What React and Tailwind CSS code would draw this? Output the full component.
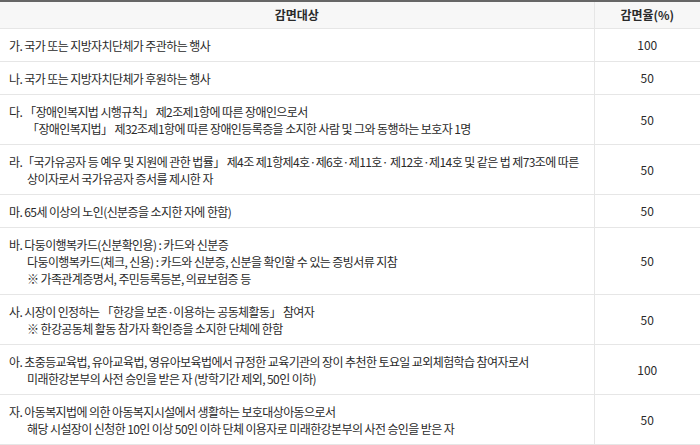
const rows = [
  { lines: ['가. 국가 또는 지방자치단체가 주관하는 행사'], rate: '100' },
  { lines: ['나. 국가 또는 지방자치단체가 후원하는 행사'], rate: '50' },
  {
    lines: [
      '다. 「장애인복지법 시행규칙」 제2조제1항에 따른 장애인으로서',
      '「장애인복지법」 제32조제1항에 따른 장애인등록증을 소지한 사람 및 그와 동행하는 보호자 1명',
    ],
    rate: '50',
  },
  {
    lines: [
      '라.「국가유공자 등 예우 및 지원에 관한 법률」 제4조 제1항제4호·제6호·제11호· 제12호·제14호 및 같은 법 제73조에 따른',
      '상이자로서 국가유공자 증서를 제시한 자',
    ],
    rate: '50',
  },
  { lines: ['마. 65세 이상의 노인(신분증을 소지한 자에 한함)'], rate: '50' },
  {
    lines: [
      '바. 다둥이행복카드(신분확인용) : 카드와 신분증',
      '다둥이행복카드(체크, 신용) : 카드와 신분증, 신분을 확인할 수 있는 증빙서류 지참',
      '※ 가족관계증명서, 주민등록등본, 의료보험증 등',
    ],
    rate: '50',
  },
  {
    lines: [
      '사. 시장이 인정하는 「한강을 보존·이용하는 공동체활동」 참여자',
      '※ 한강공동체 활동 참가자 확인증을 소지한 단체에 한함',
    ],
    rate: '50',
  },
  {
    lines: [
      '아. 초중등교육법, 유아교육법, 영유아보육법에서 규정한 교육기관의 장이 추천한 토요일 교외체험학습 참여자로서',
      '미래한강본부의 사전 승인을 받은 자 (방학기간 제외, 50인 이하)',
    ],
    rate: '100',
  },
  {
    lines: [
      '자. 아동복지법에 의한 아동복지시설에서 생활하는 보호대상아동으로서',
      '해당 시설장이 신청한 10인 이상 50인 이하 단체 이용자로 미래한강본부의 사전 승인을 받은 자',
    ],
    rate: '50',
  },
];

export default function App() {
  return (
    <div className="w-[700px] bg-white text-[12px] leading-[17px] text-[#2a2a2a] [font-family:'Noto_Sans_CJK_KR','Noto_Sans',sans-serif]">
      <table className="w-full border-collapse border-t-2 border-t-[#666]">
        <thead>
          <tr className="bg-[#f7f7f7]">
            <th className="h-[27px] border-b border-r border-[#e6e6e6] font-bold">감면대상</th>
            <th className="w-[106px] border-b border-[#e6e6e6] font-bold">감면율(%)</th>
          </tr>
        </thead>
        <tbody>
          {rows.map((row, i) => (
            <tr key={i}>
              <td className="border-b border-r border-[#e6e6e6] pt-2 pb-[7px] pl-[9px] pr-1 text-left tracking-[-0.6px]">
                {row.lines.map((line, j) => (
                  <div key={j} className={j > 0 ? 'whitespace-nowrap pl-[18px]' : 'whitespace-nowrap'}>{line}</div>
                ))}
              </td>
              <td className="border-b border-[#e6e6e6] text-center">{row.rate}</td>
            </tr>
          ))}
        </tbody>
      </table>
    </div>
  );
}
